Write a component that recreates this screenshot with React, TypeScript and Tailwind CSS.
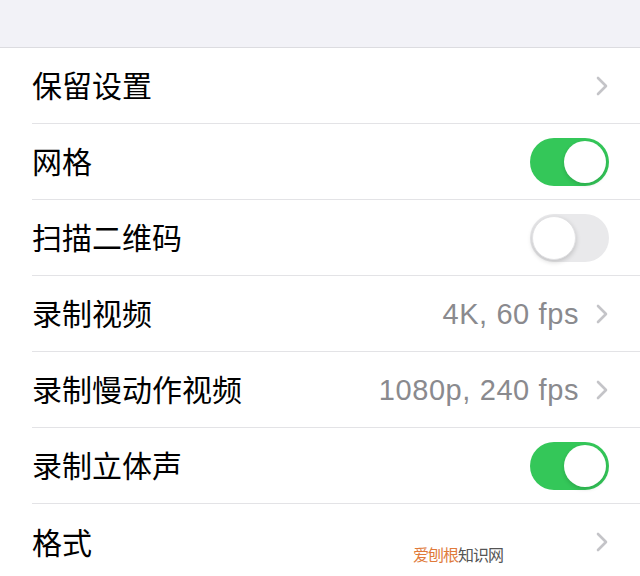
const font = { fontFamily: '"Liberation Sans", "Noto Sans CJK SC", sans-serif' }

type Row = { label: string; value?: string; toggle?: boolean; on?: boolean }

const rows: Row[] = [
  { label: '保留设置' },
  { label: '网格', toggle: true, on: true },
  { label: '扫描二维码', toggle: true, on: false },
  { label: '录制视频', value: '4K, 60 fps' },
  { label: '录制慢动作视频', value: '1080p, 240 fps' },
  { label: '录制立体声', toggle: true, on: true },
  { label: '格式' },
]

function Chevron() {
  return (
    <svg width="14" height="22" viewBox="0 0 14 22" className="ml-4 shrink-0">
      <polyline points="3,3 11,11 3,19" fill="none" stroke="#c4c4c8" strokeWidth="2.6" strokeLinecap="round" strokeLinejoin="round" />
    </svg>
  )
}

function Toggle({ on }: { on: boolean }) {
  return on ? (
    <div className="flex h-[48px] w-[79px] items-center justify-end rounded-full bg-[#34c759] px-[3px]">
      <div className="h-[42px] w-[42px] rounded-full bg-white shadow-[0_2px_4px_rgba(0,0,0,0.15)]" />
    </div>
  ) : (
    <div className="flex h-[48px] w-[79px] items-center justify-start rounded-full bg-[#e9e9eb] px-[2px]">
      <div className="h-[44px] w-[44px] rounded-full border border-[#e2e2e4] bg-white shadow-[0_2px_5px_rgba(0,0,0,0.18)]" />
    </div>
  )
}

export default function App() {
  return (
    <div className="relative h-[576px] w-[640px] overflow-hidden bg-white" style={font}>
      <div className="h-[48px] border-b border-[#dcdce0] bg-[#f2f2f7]" />
      <div className="pl-[32px]">
        {rows.map((r, i) => (
          <div key={r.label} className={`flex h-[76px] items-center pr-[31px] ${i < rows.length - 1 ? 'border-b border-[#e3e3e6]' : ''}`}>
            <span className="flex-1 pt-[3px] text-[30px] leading-none text-black">{r.label}</span>
            {r.value && <span className="pt-[2px] text-[29px] leading-none tracking-[0.6px] text-[#8a8a8e]">{r.value}</span>}
            {r.toggle ? <Toggle on={!!r.on} /> : <Chevron />}
          </div>
        ))}
      </div>
      <div className="absolute left-[413px] top-[548px] text-[16px] leading-none tracking-[-1px]">
        <span className="text-[#e07a3a]">爱刨根</span>
        <span className="text-[#555]">知识网</span>
      </div>
    </div>
  )
}
